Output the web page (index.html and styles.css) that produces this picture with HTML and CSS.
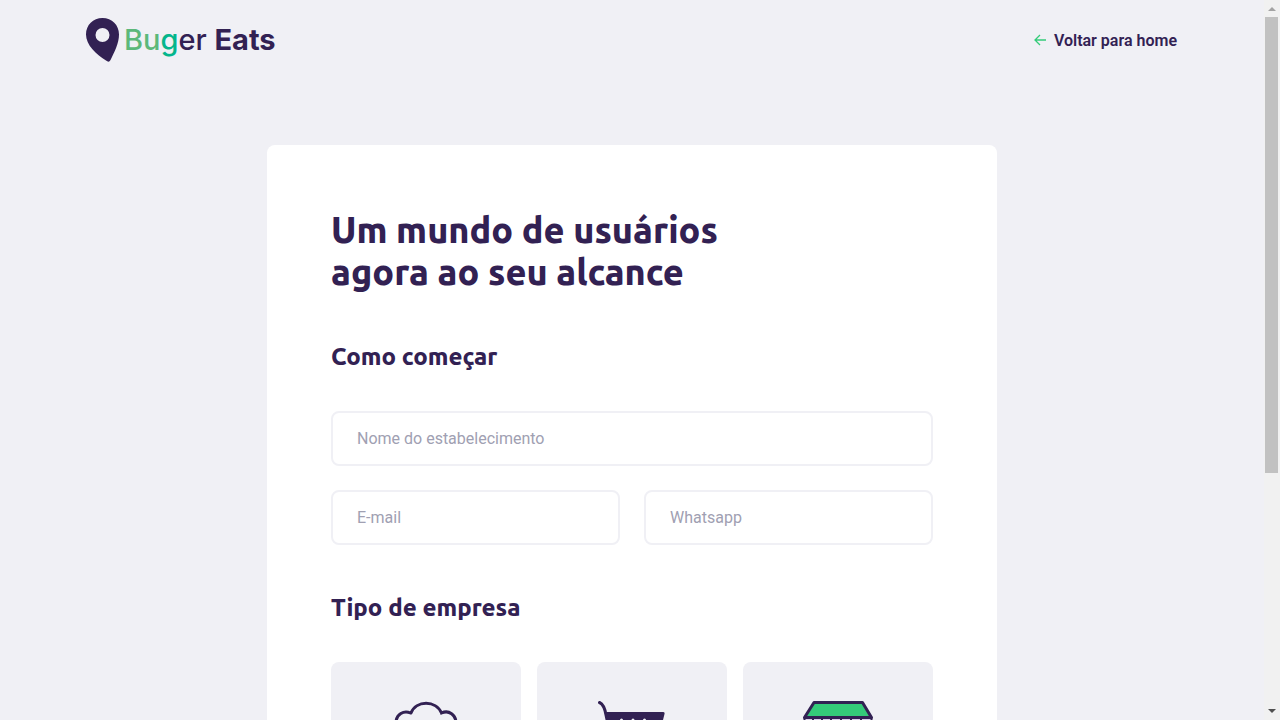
FILE: index.html
```html
<!DOCTYPE html>
<html lang="pt-BR">
<head>
<meta charset="utf-8">
<meta name="viewport" content="width=device-width, initial-scale=1">
<title>Buger Eats</title>
<link rel="stylesheet" href="styles.css">
</head>
<body>
<div class="shell">
  <div class="page">
    <header class="header">
      <div class="logo">
        <svg class="logo-pin" viewBox="0 0 33 44" aria-hidden="true">
          <path fill-rule="evenodd" d="M16.5 0C26 0 33 7 33 16.500C33 25 28.500 34 24.500 42Q23 45 20 42.500C10 36 0 27 0 16.500C0 7 7 0 16.500 0ZM16.500 10a7 7 0 1 0 0 14a7 7 0 1 0 0-14Z"/>
        </svg>
        <span class="logo-name"><span class="logo-green">Bu</span><span class="logo-teal">g</span>er <b class="logo-bold">Eats</b></span>
      </div>
      <a class="back" href="#">
        <svg class="back-arrow" viewBox="0 0 12 12" aria-hidden="true"><path d="M12 6H1M6 1L1 6l5 5"/></svg>
        Voltar para home
      </a>
    </header>

    <form class="card">
      <h1 class="title">Um mundo de usuários<br>agora ao seu alcance</h1>

      <section class="section">
        <h2 class="subtitle">Como começar</h2>
        <div class="fields">
          <input class="field field-wide" type="text" placeholder="Nome do estabelecimento" aria-label="Nome do estabelecimento">
          <input class="field" type="email" placeholder="E-mail" aria-label="E-mail">
          <input class="field" type="text" placeholder="Whatsapp" aria-label="Whatsapp">
        </div>
      </section>

      <section class="section">
        <h2 class="subtitle">Tipo de empresa</h2>
        <div class="types">
          <button class="type" type="button" aria-label="Restaurante">
            <svg class="type-icon" viewBox="0 0 72 72" aria-hidden="true">
              <path class="line" d="M21 13C26 0 46 0 51.500 13C59 9.500 66 15 66 23C66 30 61 34 56 35V62H16V35C11 34 6 30 6 23C6 14 14 10 20.500 13"/>
              <path class="line" d="M16 53H56"/>
            </svg>
          </button>
          <button class="type" type="button" aria-label="Mercado">
            <svg class="type-icon" viewBox="0 0 72 72" aria-hidden="true">
              <path class="line" d="M3.500 2.500C7 4 9 9 10 15L17 47H60"/>
              <path class="solid" d="M8.500 12H67Q69 12 68.500 14L62 40H15Z"/>
              <path class="slit" d="M25.500 20V33M37 20V33M48.500 20V33"/>
              <circle class="solid" cx="24" cy="57" r="5"/><circle class="solid" cx="53" cy="57" r="5"/>
            </svg>
          </button>
          <button class="type" type="button" aria-label="Loja">
            <svg class="type-icon" viewBox="0 0 72 72" aria-hidden="true">
              <path class="awning" d="M12 2.500H60.500L69.500 17.500H2.500Z"/>
              <path class="valance" d="M2.500 18H69.500V27H2.500ZM11 18V27M20 18V27M29 18V27M39 18V27M49 18V27M59 18V27"/>
              <path class="line" d="M8 28V64H64V28"/>
            </svg>
          </button>
        </div>
      </section>
    </form>
  </div>

  <div class="scrollbar" aria-hidden="true">
    <svg class="scroll-arrow" viewBox="0 0 16 17"><path fill="#a3a3a3" d="M8 7L12 11H4Z"/></svg>
    <div class="scroll-track"><div class="scroll-thumb"></div></div>
    <svg class="scroll-arrow" viewBox="0 0 16 17"><path fill="#505050" d="M4 6H12L8 10Z"/></svg>
  </div>
</div>
</body>
</html>
```
FILE: styles.css
```css
* { box-sizing: border-box; margin: 0; }

body {
  background: #f0f0f5;
  color: #322153;
  font: 16px Roboto, sans-serif;
}

.shell { display: flex; height: 100vh; }

.page {
  flex: 1;
  min-width: 0;
  overflow-y: auto;
  scrollbar-width: none;
}

.header {
  display: flex;
  align-items: center;
  justify-content: space-between;
  max-width: 1092px;
  margin: 0 auto;
  padding: 18px 1px 0 0;
}

.logo { display: flex; align-items: center; gap: 5px; }
.logo-pin { width: 33px; height: 44px; fill: #322153; }
.logo-name { font: 500 29px/40px Inter, sans-serif; white-space: nowrap; }
.logo-green { color: #5cb87a; }
.logo-teal { color: #04b68c; }
.logo-bold { font-weight: 700; }

.back {
  display: flex;
  align-items: center;
  gap: 8px;
  color: #322153;
  font-weight: 600;
  text-decoration: none;
}

.back-arrow {
  width: 12px;
  height: 12px;
  fill: none;
  stroke: #34cb79;
  stroke-width: 1.3;
}

.card {
  max-width: 730px;
  margin: 83px auto 80px;
  padding: 64px;
  border-radius: 8px;
  background: #fff;
}

.title {
  margin-bottom: 50px;
  font: 800 36px/42px Ubuntu, "Noto Sans", sans-serif;
}

.section + .section { margin-top: 49px; }

.subtitle {
  margin-bottom: 40px;
  font: 800 24px/28px Ubuntu, "Noto Sans", sans-serif;
}

.fields { display: grid; grid-template-columns: 1fr 1fr; gap: 24px; }

.field {
  width: 100%;
  min-width: 0;
  height: 55px;
  padding: 0 24px;
  border: 2px solid #f0f0f5;
  border-radius: 8px;
  background: #fff;
  color: #322153;
  font: inherit;
}

.field-wide { grid-column: 1 / -1; }
.field::placeholder { color: #a0a0b2; opacity: 1; }

.types { display: grid; grid-template-columns: repeat(3, 1fr); gap: 16px; }

.type {
  display: flex;
  justify-content: center;
  padding: 38px 16px;
  border: 0;
  border-radius: 8px;
  background: #f0f0f5;
}

.type-icon { width: 72px; height: 72px; }
.line { fill: none; stroke: #322153; stroke-width: 3; stroke-linecap: round; }
.solid { fill: #322153; }
.slit { stroke: #f0f0f5; stroke-width: 3; stroke-linecap: round; }
.awning { fill: #34cb79; stroke: #322153; stroke-width: 3; stroke-linejoin: round; }
.valance { fill: #d9cfe8; stroke: #322153; stroke-width: 2; }

.scrollbar {
  display: flex;
  flex-direction: column;
  width: 16px;
  background: #f1f1f1;
}

.scroll-arrow { width: 16px; height: 17px; }
.scroll-track { flex: 1; padding: 0 2px 0 1px; }
.scroll-thumb { height: 66.5%; background: #c1c1c1; }
```
